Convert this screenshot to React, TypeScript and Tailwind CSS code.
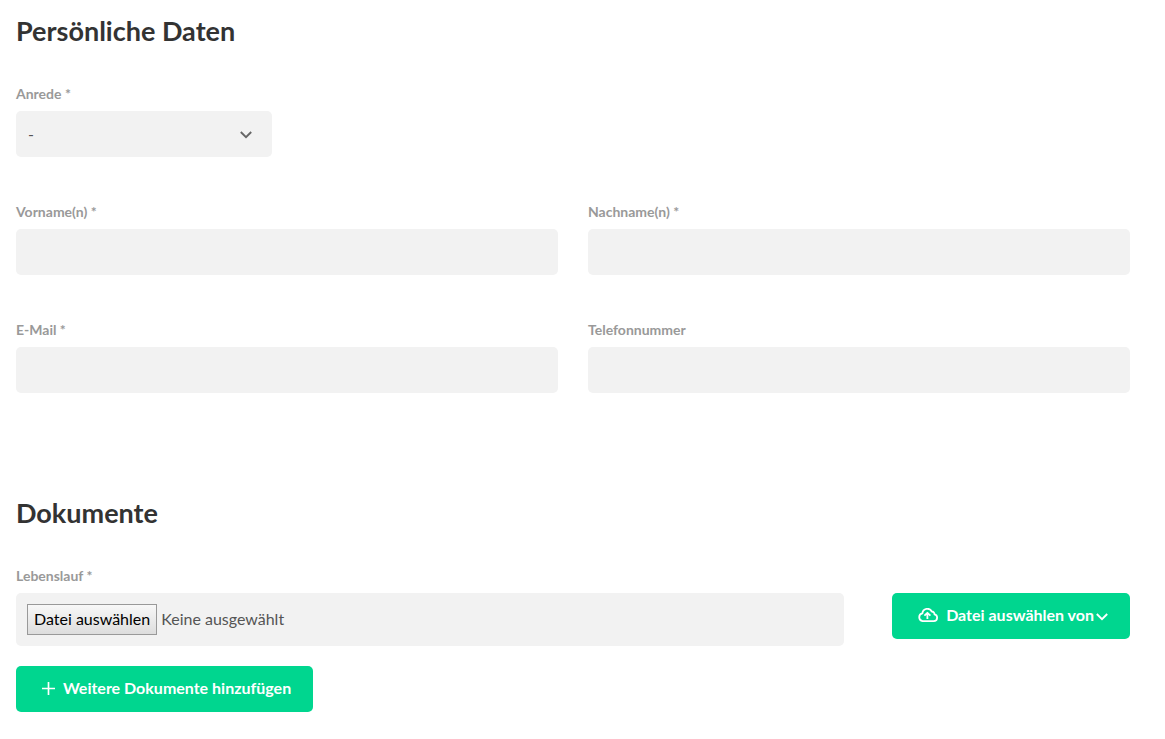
import { useRef, useState } from 'react';
import type { ReactNode } from 'react';

const fieldClass =
  'block h-[46px] w-full rounded-[5px] bg-[#f2f2f2] px-3 text-base text-[#555555] outline-none focus:ring-2 focus:ring-[#00d68f]';

const buttonClass =
  'flex h-[46px] cursor-pointer items-center rounded-[5px] bg-[#00d68f] pb-0.5 pl-[26px] text-base font-bold text-white transition-colors hover:bg-[#00c080]';

function FieldLabel({ htmlFor, children }: { htmlFor: string; children: ReactNode }) {
  return (
    <label htmlFor={htmlFor} className="mb-2 block text-sm leading-[18px] font-bold text-[#999999]">
      {children}
    </label>
  );
}

function TextField({ id, label, type = 'text' }: { id: string; label: string; type?: string }) {
  return (
    <div>
      <FieldLabel htmlFor={id}>{label}</FieldLabel>
      <input id={id} name={id} type={type} className={fieldClass} />
    </div>
  );
}

function SectionTitle({ children }: { children: ReactNode }) {
  return <h2 className="mb-[38px] text-[27px] leading-8 font-bold text-[#333333]">{children}</h2>;
}

function ChevronIcon({ className }: { className: string }) {
  return (
    <svg viewBox="0 0 12 8" fill="none" stroke="currentColor" strokeWidth="1.9" className={className} aria-hidden="true">
      <path d="M.8 1 6 6.2 11.2 1" />
    </svg>
  );
}

function CloudUploadIcon() {
  return (
    <svg
      viewBox="0 0 20 14"
      fill="none"
      stroke="currentColor"
      strokeWidth="1.8"
      strokeLinejoin="round"
      className="h-[14px] w-5"
      aria-hidden="true"
    >
      <path d="M4.6 13.1h11.2a3.4 3.4 0 0 0 .7-6.7 2.8 2.8 0 0 0-2.7-2.9A5 5 0 0 0 4.4 5.4a3.9 3.9 0 0 0 .2 7.7Z" />
      <path d="M9.4 11V5M6.4 7.7l3-2.9 3 2.9" />
    </svg>
  );
}

export default function App() {
  const fileInput = useRef<HTMLInputElement>(null);
  const [fileName, setFileName] = useState('');

  return (
    <form
      className="bg-white pt-[15px] pr-[35px] pb-7 pl-4 font-['Lato','Noto_Sans',sans-serif]"
      onSubmit={(e) => e.preventDefault()}
    >
      {/* Persönliche Daten */}
      <section className="mb-[104px]">
        <SectionTitle>Persönliche Daten</SectionTitle>

        <div className="mb-[46px] w-64">
          <FieldLabel htmlFor="anrede">Anrede *</FieldLabel>
          <div className="relative">
            <select id="anrede" name="anrede" defaultValue="" className={`${fieldClass} appearance-none`}>
              <option value="">-</option>
              <option value="frau">Frau</option>
              <option value="herr">Herr</option>
            </select>
            <ChevronIcon className="pointer-events-none absolute top-5 right-5 h-2 w-3 text-[#666666]" />
          </div>
        </div>

        <div className="grid grid-cols-2 gap-x-[30px] gap-y-[46px]">
          <TextField id="vorname" label="Vorname(n) *" />
          <TextField id="nachname" label="Nachname(n) *" />
          <TextField id="email" label="E-Mail *" type="email" />
          <TextField id="telefon" label="Telefonnummer" type="tel" />
        </div>
      </section>

      {/* Dokumente */}
      <section>
        <SectionTitle>Dokumente</SectionTitle>

        <FieldLabel htmlFor="lebenslauf">Lebenslauf *</FieldLabel>
        <div className="mb-5 flex items-start gap-12">
          <div className="flex h-[53px] flex-1 items-center gap-1 rounded-[5px] bg-[#f2f2f2] px-[11px] text-base">
            <input
              ref={fileInput}
              id="lebenslauf"
              name="lebenslauf"
              type="file"
              className="sr-only"
              onChange={(e) => setFileName(e.target.files?.[0]?.name ?? '')}
            />
            <button
              type="button"
              onClick={() => fileInput.current?.click()}
              className="h-[31px] border border-[#999999] bg-linear-to-b from-[#f8f8f8] to-[#dddddd] px-[6px] pb-0.5 text-black"
            >
              Datei auswählen
            </button>
            <span className="pb-0.5 text-[#555555]">{fileName || 'Keine ausgewählt'}</span>
          </div>

          <button type="button" className={`${buttonClass} pr-[22px]`}>
            <CloudUploadIcon />
            <span className="mr-0.5 ml-2">Datei auswählen von</span>
            <ChevronIcon className="mt-1 h-2 w-3" />
          </button>
        </div>

        <button type="button" className={`${buttonClass} pr-[22px]`}>
          <svg viewBox="0 0 14 14" stroke="currentColor" strokeWidth="1.8" className="mr-2 size-[13px]" aria-hidden="true">
            <path d="M7 0v14M0 7h14" />
          </svg>
          Weitere Dokumente hinzufügen
        </button>
      </section>
    </form>
  );
}
